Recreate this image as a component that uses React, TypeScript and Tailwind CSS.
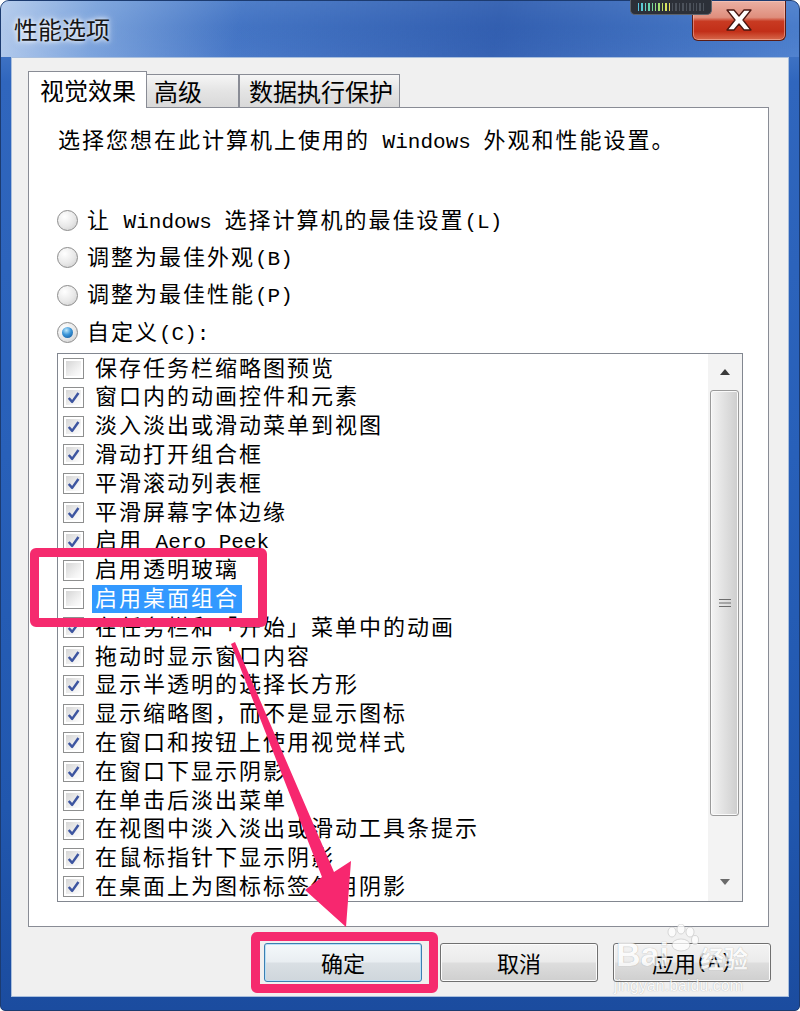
import React from 'react';

const options: [string, boolean][] = [
  ['保存任务栏缩略图预览', false],
  ['窗口内的动画控件和元素', true],
  ['淡入淡出或滑动菜单到视图', true],
  ['滑动打开组合框', true],
  ['平滑滚动列表框', true],
  ['平滑屏幕字体边缘', true],
  ['启用 Aero Peek', true],
  ['启用透明玻璃', false],
  ['启用桌面组合', false],
  ['在任务栏和「开始」菜单中的动画', true],
  ['拖动时显示窗口内容', true],
  ['显示半透明的选择长方形', true],
  ['显示缩略图，而不是显示图标', true],
  ['在窗口和按钮上使用视觉样式', true],
  ['在窗口下显示阴影', true],
  ['在单击后淡出菜单', true],
  ['在视图中淡入淡出或滑动工具条提示', true],
  ['在鼠标指针下显示阴影', true],
  ['在桌面上为图标标签使用阴影', true],
];

const radios = [
  ['让 Windows 选择计算机的最佳设置(L)', false],
  ['调整为最佳外观(B)', false],
  ['调整为最佳性能(P)', false],
  ['自定义(C):', true],
] as const;

const meterBars = [
  'bg-[#58c6e0]', 'bg-[#5ccbd6]', 'bg-[#62d0c6]', 'bg-[#6ad4b2]', 'bg-[#78d99c]',
  'bg-[#8ede86]', 'bg-[#a6e173]', 'bg-[#bfe266]', 'bg-[#d6e35e]', 'bg-[#e4de5a]',
  'bg-[#4c525b]', 'bg-[#4c525b]', 'bg-[#4c525b]', 'bg-[#4c525b]', 'bg-[#4c525b]',
  'bg-[#4c525b]', 'bg-[#4c525b]', 'bg-[#4c525b]', 'bg-[#4c525b]', 'bg-[#4c525b]',
];

// CJK gets the wide SimSun-like spacing, latin runs stay monospace
function Txt({ s }: { s: string }) {
  const parts = s.split(/([\x20-\x7e]+)/).filter(Boolean);
  return (
    <span className="relative top-[2px] whitespace-pre">
      {parts.map((p, i) =>
        /^[\x20-\x7e]+$/.test(p) ? (
          <span key={i} className="text-[21px]">{p}</span>
        ) : (
          <span key={i} className="tracking-[2px]">{p}</span>
        )
      )}
    </span>
  );
}

function Checkbox({ on }: { on: boolean }) {
  return (
    <span className="flex h-[21px] w-[21px] shrink-0 items-center justify-center border border-[#8e8f8f] bg-white p-[2px]">
      <span className="relative flex h-full w-full items-center justify-center bg-[linear-gradient(135deg,#d6d6d6,#f4f4f4_70%,#fdfdfd)]">
        {on && (
          <svg viewBox="0 0 20 20" className="absolute left-[-2px] top-[-2px] h-[19px] w-[19px]">
            <path d="M5 10.5 L8.6 14.6 L15.2 5.2" fill="none" stroke="#3d55a0" strokeWidth="2.6" strokeLinejoin="round" />
          </svg>
        )}
      </span>
    </span>
  );
}

function Radio({ on }: { on: boolean }) {
  return (
    <span className="flex h-[21px] w-[21px] shrink-0 items-center justify-center rounded-full border border-[#8c8c8c] bg-[radial-gradient(circle_at_35%_30%,#ffffff,#e8e8e8_55%,#c9c9c9)]">
      {on && (
        <span className="h-[11px] w-[11px] rounded-full bg-[radial-gradient(circle_at_40%_30%,#bfe8fb,#3a95d8_45%,#0f4f92)]" />
      )}
    </span>
  );
}

function Btn({ label, primary, className }: { label: React.ReactNode; primary?: boolean; className?: string }) {
  return (
    <div
      className={`flex h-[39px] w-[158px] items-center justify-center rounded-[3px] border text-[22px] text-black ${
        primary
          ? 'border-[#3c7fb1] shadow-[inset_0_0_0_1px_#b9e0f7] bg-[linear-gradient(180deg,#f4f8fb_0%,#e9eef2_48%,#d9dfe4_52%,#cfd6dc_100%)]'
          : 'border-[#707070] shadow-[inset_0_0_0_1px_#fcfcfc] bg-[linear-gradient(180deg,#f3f3f3_0%,#ebebeb_48%,#dddddd_52%,#cfcfcf_100%)]'
      } ${className ?? ''}`}
    >
      {label}
    </div>
  );
}

export default function App() {
  return (
    <div className="relative h-[1011px] w-[800px] overflow-hidden bg-white font-['Noto_Sans_CJK_SC',sans-serif]">
      {/* window frame */}
      <div className="flex h-full flex-col rounded-t-[9px] rounded-b-[5px] border border-[#1c3b70] bg-[linear-gradient(180deg,#5b8cd2_0%,#3066bd_8%,#2860b9_45%,#2157ae_80%,#1b4c9f_100%)] px-[10px] pb-[13px]">
        {/* title bar */}
        <div className="-mx-[10px] flex h-[56px] shrink-0 rounded-t-[8px] bg-[linear-gradient(100deg,rgba(215,228,246,0.75)_0%,rgba(160,190,232,0.55)_12%,rgba(30,70,165,0.2)_30%,rgba(10,45,135,0.4)_62%,rgba(60,110,200,0.15)_100%),linear-gradient(180deg,rgba(0,0,0,0)_45%,rgba(130,175,235,0.35)_100%)] pl-[13px] pr-[13px]">
          <div className="mt-[13px] text-[24px] leading-[30px] text-[#161616] [text-shadow:0_0_8px_#ffffff,0_0_4px_#ffffff]">性能选项</div>
          <div className="ml-auto flex h-[40px] w-[94px] items-center justify-center rounded-b-[6px] border border-t-0 border-[#5b1c14] bg-[linear-gradient(180deg,#eab0a3_0%,#df8e7d_42%,#c83a22_52%,#c22f18_78%,#d76a4c_100%)] shadow-[inset_0_0_0_1px_rgba(255,210,200,0.45)]">
            <svg viewBox="0 0 28 22" className="mb-[2px] h-[22px] w-[28px]">
              <path
                d="M2 1 H9 L14 7 L19 1 H26 L18 11 L26 21 H19 L14 15 L9 21 H2 L10 11 Z"
                fill="#ffffff"
                stroke="#4a1610"
                strokeWidth="1.3"
                strokeLinejoin="round"
              />
            </svg>
          </div>
        </div>

        {/* client area */}
        <div className="flex flex-1 flex-col border border-[#a9bfdd] bg-[#f0f0f0] pl-[16px] pt-[13px]">
          {/* tabs */}
          <div className="flex h-[36px] items-end">
            <div className="relative z-10 -mb-px flex h-[37px] w-[119px] items-center border border-b-0 border-[#898c95] bg-white pl-[11px] text-[24px] text-black">
              视觉效果
            </div>
            <div className="flex h-[33px] w-[92px] items-center border border-l-0 border-b-0 border-[#898c95] bg-[linear-gradient(180deg,#f6f6f6,#e4e4e4_50%,#d9d9d9)] pl-[7px] text-[24px] text-black">
              高级
            </div>
            <div className="flex h-[33px] w-[161px] items-center border border-b-0 border-[#898c95] bg-[linear-gradient(180deg,#f6f6f6,#e4e4e4_50%,#d9d9d9)] pl-[9px] text-[24px] text-black">
              数据执行保护
            </div>
          </div>

          {/* tab page */}
          <div className="flex h-[820px] w-[741px] flex-col border border-[#898c95] bg-white px-[28px] font-['Liberation_Mono','Noto_Sans_CJK_SC',monospace] text-[22px] text-black">
            <div className="mt-[18px] h-[30px] pl-[1px] leading-[30px]">
              <Txt s="选择您想在此计算机上使用的 Windows 外观和性能设置。" />
            </div>

            <div className="mt-[46px] flex flex-col">
              {radios.map(([label, on]) => (
                <div key={label} className="flex h-[37.3px] items-center gap-[9px]">
                  <Radio on={on} />
                  <span className="leading-[30px]">
                    <Txt s={label} />
                  </span>
                </div>
              ))}
            </div>

            {/* list box */}
            <div className="mt-[2px] flex h-[549px] w-[686px] border border-[#828790] bg-white">
              <div className="flex flex-1 flex-col">
                {options.map(([label, on], i) => (
                  <div key={label} className="flex flex-1 items-center pl-[5px]">
                    <Checkbox on={on} />
                    <span
                      className={`ml-[8px] flex h-full items-center px-[3px] leading-[28px] ${
                        i === 8 ? 'bg-[#3399ff] text-white' : ''
                      }`}
                    >
                      <Txt s={label} />
                    </span>
                  </div>
                ))}
              </div>

              {/* scrollbar */}
              <div className="flex w-[34px] flex-col bg-[#f3f3f3] pl-[2px] pr-[3px]">
                <div className="flex h-[36px] items-center justify-center">
                  <svg viewBox="0 0 10 6" className="h-[6px] w-[10px]">
                    <path d="M0 6 L5 0 L10 6 Z" fill="#3a3a3a" />
                  </svg>
                </div>
                <div className="flex h-[426px] items-center justify-center rounded-[3px] border border-[#9a9a9a] bg-[linear-gradient(90deg,#f4f4f4,#e4e4e4_40%,#d5d5d5_80%,#cdcdcd)] shadow-[inset_0_0_0_1px_#fafafa]">
                  <svg viewBox="0 0 12 10" className="h-[10px] w-[12px]">
                    <path d="M0 1.5 H12 M0 5 H12 M0 8.5 H12" stroke="#6d6d6d" strokeWidth="1.2" />
                  </svg>
                </div>
                <div className="flex-1" />
                <div className="flex h-[38px] items-center justify-center">
                  <svg viewBox="0 0 10 6" className="h-[6px] w-[10px]">
                    <path d="M0 0 L10 0 L5 6 Z" fill="#6a6a6a" />
                  </svg>
                </div>
              </div>
            </div>
          </div>

          {/* buttons */}
          <div className="mt-[16px] flex">
            <Btn label="确定" primary className="ml-[236px]" />
            <Btn label="取消" className="ml-[18px]" />
            <Btn
              label={
                <>
                  应用<span className="font-['Liberation_Mono',monospace] text-[20px]">(A)</span>
                </>
              }
              className="ml-[15px]"
            />
          </div>
        </div>
      </div>

      {/* gadget meter over the title bar */}
      <div className="absolute left-[630px] top-0 flex h-[15px] w-[82px] items-start gap-[2px] rounded-b-[5px] border border-t-0 border-[#5d636c] bg-[#2c3038] px-[7px] pt-[3px]">
        {meterBars.map((c, i) => (
          <span key={i} className={`h-[8px] w-[1.5px] ${c}`} />
        ))}
      </div>

      {/* annotations */}
      <div className="pointer-events-none absolute left-[30px] top-[548px] h-[79px] w-[237px] rounded-[6px] border-[9px] border-[#f52a6e]" />
      <div className="pointer-events-none absolute left-[251px] top-[932px] h-[61px] w-[187px] rounded-[6px] border-[9px] border-[#f52a6e]" />
      <svg className="pointer-events-none absolute left-0 top-0 h-[1011px] w-[800px]" viewBox="0 0 800 1011">
        <polygon
          points="231,644 235,642 334,872 351,861 346,927 305,890 322,877"
          fill="#f7276f"
        />
      </svg>

      {/* watermark */}
      <div className="pointer-events-none absolute left-[614px] top-[924px] opacity-75">
        <div className="relative h-[52px] w-[140px]">
          <span className="absolute left-[2px] top-[10px] font-['Liberation_Sans',sans-serif] text-[34px] font-bold leading-[40px] text-white [text-shadow:0_0_1px_#8a8a8a]">
            Bai
          </span>
          <svg viewBox="0 0 40 28" className="absolute left-[48px] top-0 h-[28px] w-[40px]">
            <g fill="#ffffff" stroke="#b0b0b0" strokeWidth="0.6">
              <ellipse cx="10" cy="8" rx="4" ry="5" />
              <ellipse cx="19" cy="5" rx="4" ry="5" />
              <ellipse cx="28" cy="8" rx="4" ry="5" />
              <ellipse cx="33" cy="16" rx="3.5" ry="4.5" />
              <ellipse cx="19" cy="21" rx="9" ry="6" />
            </g>
          </svg>
          <span className="absolute left-[86px] top-[20px] text-[24px] font-bold leading-[28px] text-white [text-shadow:0_0_1px_#8a8a8a]">
            经验
          </span>
        </div>
        <div className="mt-[2px] font-['Liberation_Sans',sans-serif] text-[16px] leading-[16px] text-white [text-shadow:0_0_1px_#8a8a8a]">
          jingyan.baidu.com
        </div>
      </div>
    </div>
  );
}
